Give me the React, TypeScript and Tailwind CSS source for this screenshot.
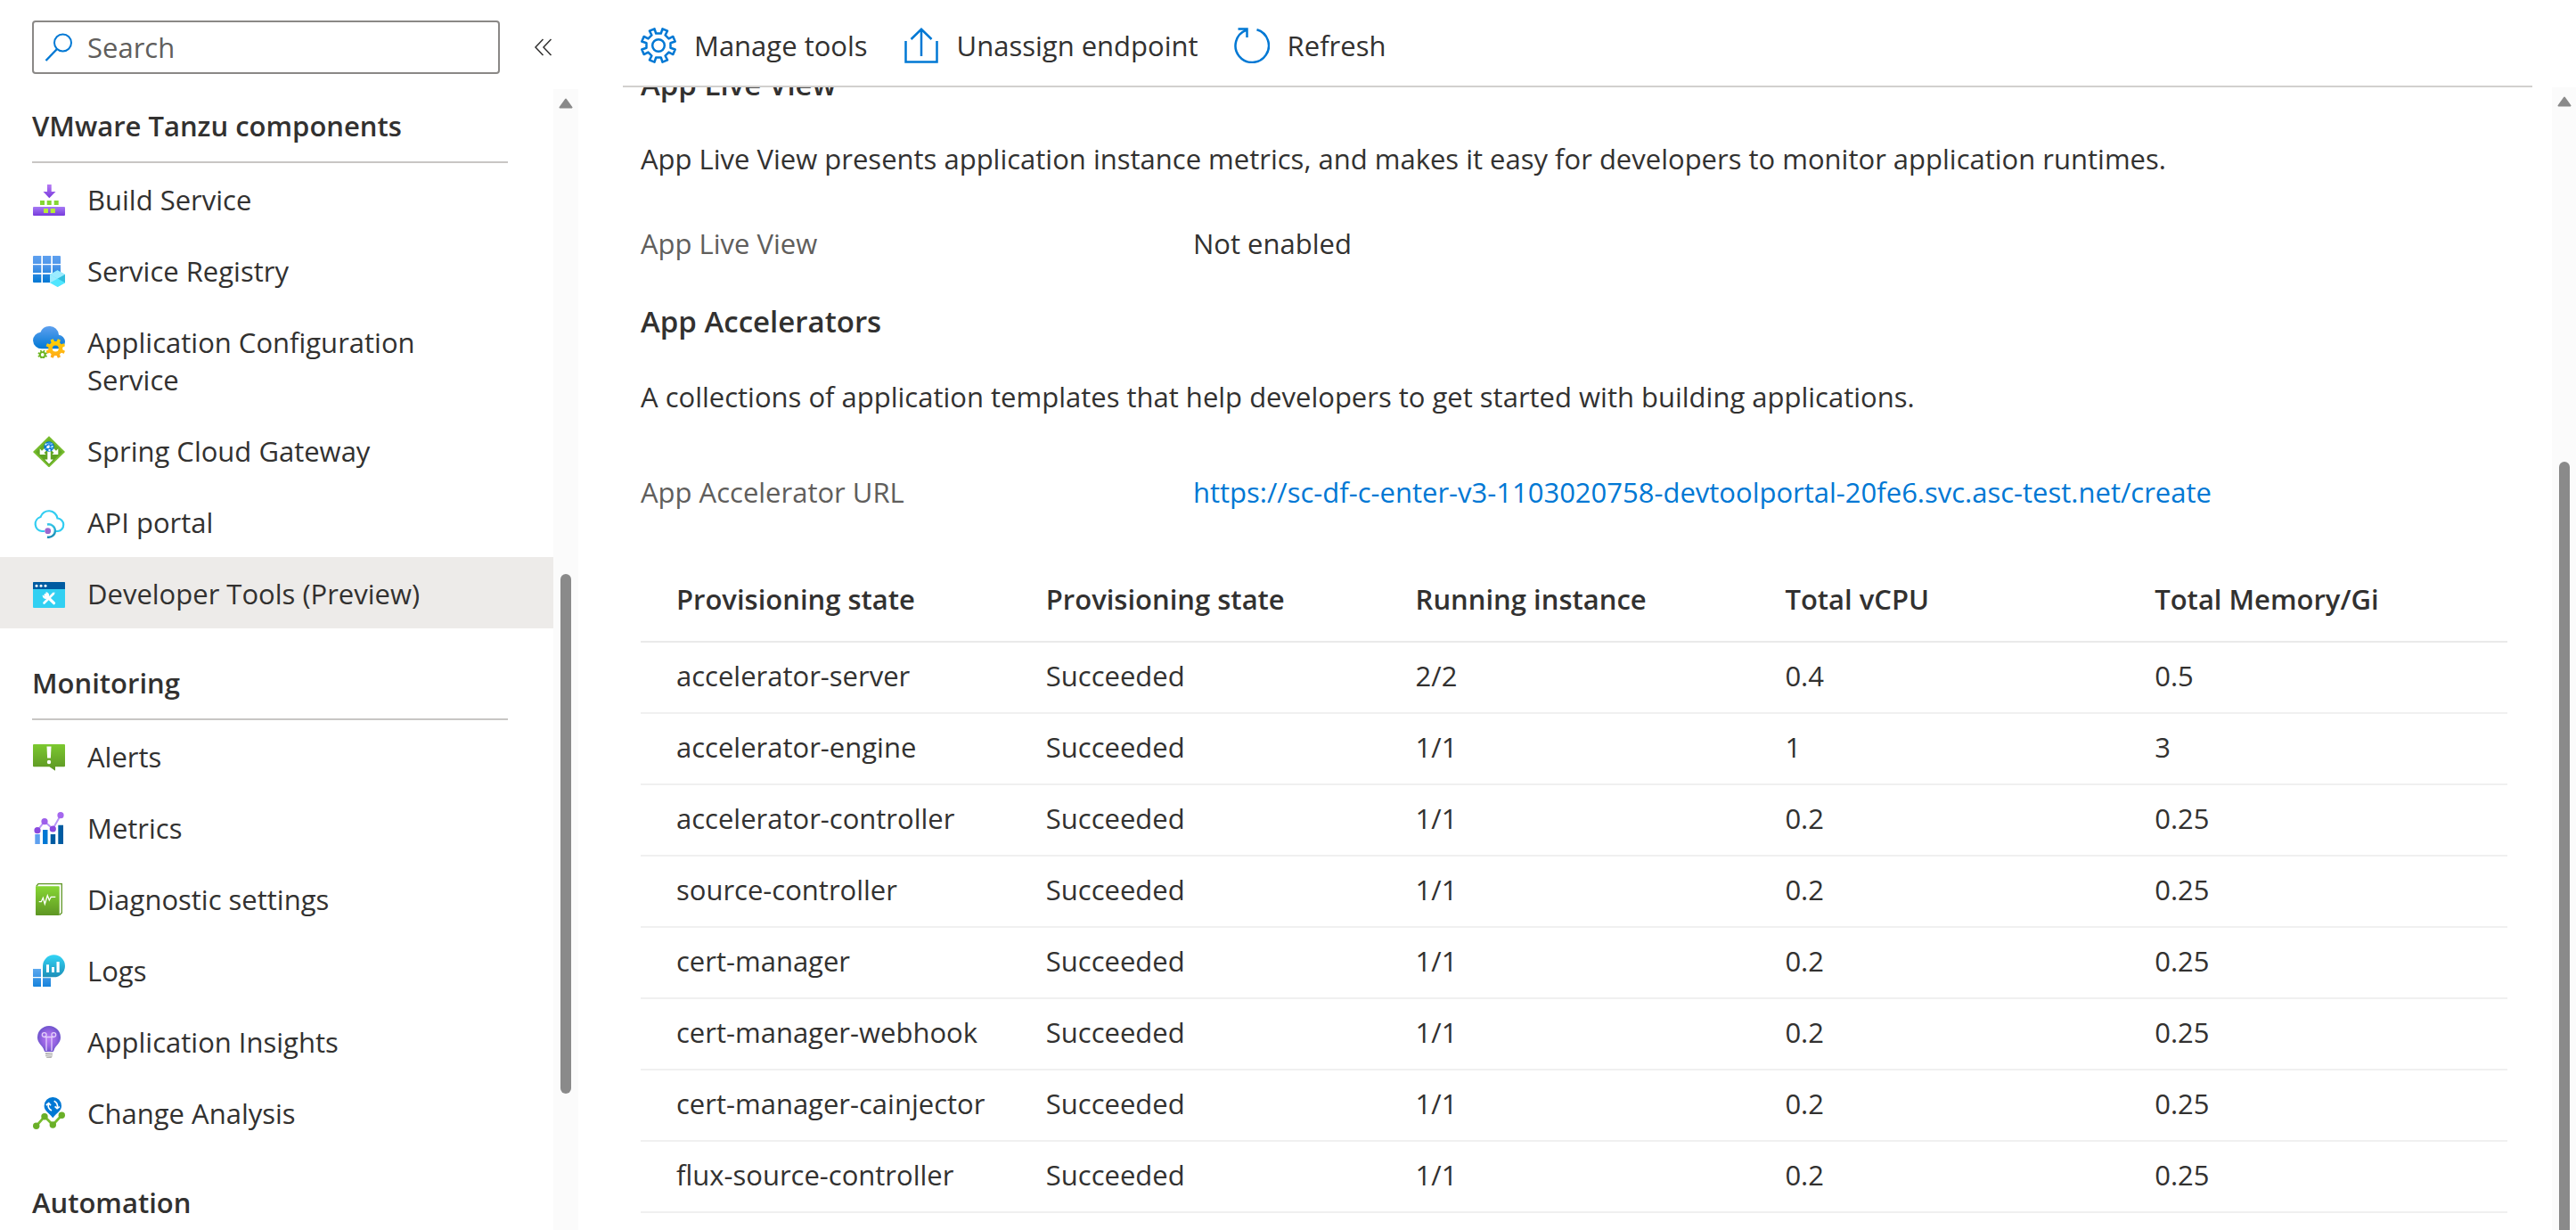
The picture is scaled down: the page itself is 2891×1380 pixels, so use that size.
import React from "react";

function gearPath(cx: number, cy: number, outer: number, inner: number, teeth: number, root = 0.3, tip = 0.19) {
  const pts: string[] = [];
  const step = (Math.PI * 2) / teeth;
  for (let i = 0; i < teeth; i++) {
    const a = i * step - Math.PI / 2 + step / 2;
    const corners: [number, number][] = [
      [inner, -root],
      [outer, -tip],
      [outer, tip],
      [inner, root],
    ];
    for (const [r, f] of corners) {
      pts.push(`${(cx + r * Math.cos(a + f * step)).toFixed(2)} ${(cy + r * Math.sin(a + f * step)).toFixed(2)}`);
    }
  }
  return `M${pts.join("L")}Z`;
}

function ring(cx: number, cy: number, r: number) {
  return `M${cx - r} ${cy}a${r} ${r} 0 1 0 ${2 * r} 0a${r} ${r} 0 1 0 ${-2 * r} 0Z`;
}

function Grad({ id, from, to }: { id: string; from: string; to: string }) {
  return (
    <linearGradient id={id} x1="0" y1="0" x2="0" y2="1">
      <stop offset="0" stopColor={from} />
      <stop offset="1" stopColor={to} />
    </linearGradient>
  );
}

function Icon({ children }: { children: React.ReactNode }) {
  return (
    <svg viewBox="0 0 36 36" className="h-9 w-9 shrink-0" aria-hidden="true">
      {children}
    </svg>
  );
}

const BuildIcon = () => (
  <Icon>
    <defs>
      <Grad id="bs-a" from="#b77af4" to="#773adc" />
      <Grad id="bs-b" from="#a67af4" to="#773adc" />
    </defs>
    <path d="M16 1h4.7v8h4.8l-7.2 7.3L11.500 9H16Z" fill="url(#bs-a)" />
    <path d="M8 19h5v5H8ZM15.700 19h5v5h-5ZM23.700 19h5v5h-5Z" fill="#86d633" />
    <rect y="26" width="36" height="10" rx="1" fill="url(#bs-b)" />
    <path d="M12 28h5v5h-5ZM19.700 28h5.200v5h-5.200Z" fill="#b4ec36" />
  </Icon>
);

const RegistryIcon = () => (
  <Icon>
    <defs>
      <linearGradient id="sr" gradientUnits="userSpaceOnUse" x1="0" y1="1" x2="0" y2="31">
        <stop offset="0" stopColor="#5ea0ef" />
        <stop offset="0.4" stopColor="#4c94e8" />
        <stop offset="1" stopColor="#0078d4" />
      </linearGradient>
    </defs>
    <path
      fill="url(#sr)"
      d="M1 1h8.300v9H0V2a1 1 0 0 1 1-1ZM11 1h9.300v9H11ZM22 1h8a1 1 0 0 1 1 1v8h-9ZM0 11.300h9.300v8.700H0ZM11 11.300h9.300v8.700H11ZM22 11.300h9v8.700h-9ZM0 21.700h9.300V31H1a1 1 0 0 1-1-1ZM11 21.700h9.300V31H11Z"
    />
    <path d="M27.500 17.300 36 22v9.300L27.500 36 19 31.300V22Z" fill="#50e6ff" />
    <path d="M27.500 17.300 36 22l-8.500 4.700L19 22Z" fill="#9cebff" />
    <path d="M27.500 26.700 36 22v9.300Z" fill="#32bedd" />
    <path d="M27.500 26.700 36 31.300 27.500 36Z" fill="#50e6ff" />
    <path d="M27.500 26.700 19 31.300V22Z" fill="#9cebff" />
  </Icon>
);

const ConfigIcon = () => (
  <Icon>
    <defs>
      <Grad id="ac-a" from="#5ea0ef" to="#0078d4" />
      <Grad id="ac-b" from="#ffd400" to="#ffa81a" />
    </defs>
    <path
      d="M36 17.500a8 8 0 0 0-7-7.700A10.200 10.200 0 0 0 18.500 0 10.500 10.500 0 0 0 8.500 6.800 9.600 9.600 0 0 0 0 16a9.800 9.800 0 0 0 10.100 9.300H28a8 8 0 0 0 8-7.800Z"
      fill="url(#ac-a)"
    />
    <path fillRule="evenodd" d={gearPath(25.3, 25, 11, 8, 8) + ring(25.3, 25, 3.5)} fill="url(#ac-b)" />
    <path fillRule="evenodd" d={gearPath(10.7, 32, 5.4, 3.9, 8) + ring(10.7, 32, 1.9)} fill="#6bb41f" />
  </Icon>
);

const GatewayIcon = () => (
  <Icon>
    <defs>
      <Grad id="sg" from="#6bb42a" to="#5a9a20" />
    </defs>
    <path d="M18 1.300 36 19 18 36.500 0 19Z" fill="#76bc2d" />
    <path d="M18 4 33 19 18 33.700 3 19Z" fill="url(#sg)" />
    <path d="M16.300 18h3.500v9.500h3L18 32.500l-4.800-5h3.100Z" fill="#fff" />
    <path d="M13.500 14.500l2.300 2.300-3.300 3.100 2 2.100H7.700v-6.800l2.300 2.500ZM22.500 14.500l-2.300 2.300 3.300 3.100-2 2.100h6.800v-6.800L26 17.700Z" fill="#fff" />
    <circle cx="18" cy="13" r="5.700" fill="#0078d4" />
    <path d="M13.500 11.500q4-4 8.500-1.500M14 16q3-6 8-6M16 9q3 5 6 7" fill="none" stroke="#83b9f9" strokeWidth="0.9" />
    <circle cx="17" cy="13.500" r="1.700" fill="#fff" />
    <circle cx="21.500" cy="13" r="1.200" fill="#c3f1ff" />
    <circle cx="18.500" cy="17" r="1.200" fill="#fff" />
    <circle cx="14.500" cy="10.500" r="1" fill="#fff" />
  </Icon>
);

const ApiIcon = () => (
  <Icon>
    <defs>
      <Grad id="ap-b" from="#32c5e8" to="#198ab3" />
    </defs>
    <path
      d="M13 28H10a8.200 8.200 0 0 1-1.500-16A9.800 9.800 0 0 1 27.500 13.500 7.300 7.300 0 0 1 28 28H24"
      fill="none"
      stroke="#32cdf1"
      strokeWidth="2.200"
    />
    <path d="M16 20.500a7.200 7.200 0 1 1 0 14" fill="none" stroke="url(#ap-b)" strokeWidth="2.400" />
    <circle cx="16.700" cy="27.700" r="3.400" fill="#9b68cf" />
  </Icon>
);

const ToolsIcon = () => (
  <Icon>
    <rect y="5" width="36" height="29" rx="1" fill="#32d0f2" />
    <path d="M1 5h34a1 1 0 0 1 1 1v7H0V6a1 1 0 0 1 1-1Z" fill="#005ba1" />
    <g fill="#fff">
      <circle cx="4" cy="9.300" r="1.500" />
      <circle cx="9" cy="9.300" r="1.500" />
      <circle cx="14" cy="9.300" r="1.500" />
    </g>
    <path d="M12.500 28.500 23 18" stroke="#fff" strokeWidth="2.600" strokeLinecap="round" />
    <path d="m22 18.700 3.300-2.700-2.300 3.600Z" fill="#fff" />
    <path d="M14 19.500 23.500 28.700" stroke="#fff" strokeWidth="3.200" strokeLinecap="round" />
    <path d="M14.500 16.300a3.800 3.800 0 1 1-3.800 3.200l2.500 1.500 1.900-1.800-.7-2.500Z" fill="#fff" />
  </Icon>
);

const AlertsIcon = () => (
  <Icon>
    <defs>
      <Grad id="al" from="#7cc92f" to="#5c9423" />
    </defs>
    <path d="M1 4h34a1 1 0 0 1 1 1v23.300a1 1 0 0 1-1 1H25v4.500l-6.500-4.500H1a1 1 0 0 1-1-1V5a1 1 0 0 1 1-1Z" fill="url(#al)" />
    <path d="M15.500 6.500h5l-.6 13h-3.800Z" fill="#fff" />
    <circle cx="18" cy="24" r="2.200" fill="#fff" />
  </Icon>
);

const MetricsIcon = () => (
  <Icon>
    <path d="M2.300 25h5.500v11H2.300Z" fill="#5ea0ef" />
    <path d="M11 20h5.500v16H11Z" fill="#0078d4" />
    <path d="M19.700 25h5.500v11h-5.500ZM28.300 14.700H34V36h-5.700Z" fill="#005ba1" />
    <path d="M5 20.700 13 10.700 22.300 19 31 3.700" fill="none" stroke="#b796f9" strokeWidth="2" />
    <g fill="#8a4adf">
      <circle cx="5" cy="20.700" r="3.600" />
      <circle cx="13" cy="10.700" r="3.600" fill="#9d5fea" />
      <circle cx="22.300" cy="19" r="3.600" />
      <circle cx="31" cy="3.700" r="3.600" fill="#a567ee" />
    </g>
  </Icon>
);

const DiagnosticIcon = () => (
  <Icon>
    <defs>
      <Grad id="dg" from="#86d633" to="#5e9624" />
    </defs>
    <path d="M3.700 3.500 6 .7h26.300v32.600L29.700 35.500" fill="#fff" stroke="#5e9624" strokeWidth="1.300" />
    <rect x="3" y="3.300" width="26.700" height="32.700" rx="0.800" fill="url(#dg)" />
    <path d="M6.700 20.700h2.600l2-4.400 2 7 3-9.600 2 5.300 2-3.700h5" fill="none" stroke="#fff" strokeWidth="1.300" />
  </Icon>
);

const LogsIcon = () => (
  <Icon>
    <defs>
      <Grad id="lg-a" from="#32d4f5" to="#1d8fb8" />
      <Grad id="lg-b" from="#5ea9ef" to="#1783dc" />
    </defs>
    <path d="M0 16h9v9H0ZM0 26.300h9V36H1a1 1 0 0 1-1-1ZM11 26.300h9V36h-9Z" fill="url(#lg-b)" />
    <path d="M11 25.300V12.700a12.500 12.500 0 1 1 12.500 12.600Z" fill="url(#lg-a)" />
    <path d="M15 11.300h3V20h-3ZM21 14h3v6h-3ZM26.500 8h3.200v12h-3.200Z" fill="#fff" />
  </Icon>
);

const InsightsIcon = () => (
  <Icon>
    <defs>
      <radialGradient id="ai" cx="0.5" cy="0.5" r="0.55">
        <stop offset="0" stopColor="#b77af4" />
        <stop offset="0.5" stopColor="#9a66e4" />
        <stop offset="1" stopColor="#6650c8" />
      </radialGradient>
    </defs>
    <path d="M31 13A13 13 0 1 0 5 13c0 6.500 6 9 7.500 14.500.2.900.700 1.500 1.500 1.500h8c.8 0 1.300-.6 1.500-1.500C25 22 31 19.500 31 13Z" fill="url(#ai)" />
    <g fill="none" stroke="#e3cffa" strokeWidth="1.300">
      <path d="M15 28V12.500M21 28V12.500M12.500 12.500h11" />
      <circle cx="12.700" cy="10" r="2.400" />
      <circle cx="23.300" cy="10" r="2.400" />
    </g>
    <path d="M14 30h8v3.500L20.500 36h-5L14 33.500Z" fill="#b3b3b3" />
    <path d="m14 32.500 8-1.200M14 34.500l8-1.200" stroke="#f2f2f2" strokeWidth="0.800" />
  </Icon>
);

const ChangeIcon = () => (
  <Icon>
    <path d="M3.700 32.300 13 21.700 22.300 31 32.300 20.300" fill="none" stroke="#76bc2d" strokeWidth="2.800" />
    <g fill="#6aaf28">
      <circle cx="3.700" cy="32.300" r="3.700" />
      <circle cx="13" cy="21.700" r="3.700" />
      <circle cx="22.300" cy="31" r="3.700" />
      <circle cx="32.300" cy="20.300" r="3.700" />
    </g>
    <path d="M32 9.700c0 5.500-5.500 7.800-9.700 13.600C18.100 17.500 12.600 15.200 12.600 9.700a9.700 9.700 0 1 1 19.400 0Z" fill="#0078d4" />
    <g fill="none" stroke="#fff" strokeWidth="1.700">
      <path d="M17.500 7.500q-1.500 5 3.500 7.500M27.200 12q1.500-5-3.500-7.800" />
      <path d="m14.800 9 2.900-2.300L20 9.300M24.600 10.300l2.500 2.300 2.800-2" />
    </g>
  </Icon>
);

const sections = [
  {
    title: "VMware Tanzu components",
    items: [
      { label: "Build Service", icon: BuildIcon },
      { label: "Service Registry", icon: RegistryIcon },
      { label: "Application Configuration Service", icon: ConfigIcon },
      { label: "Spring Cloud Gateway", icon: GatewayIcon },
      { label: "API portal", icon: ApiIcon },
      { label: "Developer Tools (Preview)", icon: ToolsIcon, selected: true },
    ],
  },
  {
    title: "Monitoring",
    items: [
      { label: "Alerts", icon: AlertsIcon },
      { label: "Metrics", icon: MetricsIcon },
      { label: "Diagnostic settings", icon: DiagnosticIcon },
      { label: "Logs", icon: LogsIcon },
      { label: "Application Insights", icon: InsightsIcon },
      { label: "Change Analysis", icon: ChangeIcon },
    ],
  },
  { title: "Automation", items: [] },
];

const columns = ["Provisioning state", "Provisioning state", "Running instance", "Total vCPU", "Total Memory/Gi"];

const rows = [
  ["accelerator-server", "Succeeded", "2/2", "0.4", "0.5"],
  ["accelerator-engine", "Succeeded", "1/1", "1", "3"],
  ["accelerator-controller", "Succeeded", "1/1", "0.2", "0.25"],
  ["source-controller", "Succeeded", "1/1", "0.2", "0.25"],
  ["cert-manager", "Succeeded", "1/1", "0.2", "0.25"],
  ["cert-manager-webhook", "Succeeded", "1/1", "0.2", "0.25"],
  ["cert-manager-cainjector", "Succeeded", "1/1", "0.2", "0.25"],
  ["flux-source-controller", "Succeeded", "1/1", "0.2", "0.25"],
];

function ScrollUpArrow() {
  return (
    <svg viewBox="0 0 16 12" className="h-3 w-4 shrink-0" aria-hidden="true">
      <path d="M8 1.500 14.500 10.500H1.500Z" fill="#8a8a8a" stroke="#8a8a8a" strokeWidth="2" strokeLinejoin="round" />
    </svg>
  );
}

function Sidebar() {
  return (
    <aside className="flex w-[649px] shrink-0 flex-col">
      <div className="flex h-[100px] shrink-0 items-start pt-[23px] pl-9">
        <label className="flex h-[60px] w-[525px] items-center gap-4 rounded-sm border-2 border-[#8a8886] pl-3">
          <svg viewBox="0 0 32 32" className="h-8 w-8 shrink-0" fill="none" stroke="#0078d4" strokeWidth="2" aria-hidden="true">
            <circle cx="20.500" cy="11" r="9.500" />
            <path d="M14 18 1.500 31" strokeWidth="2.400" />
          </svg>
          <input
            type="text"
            aria-label="Search"
            placeholder="Search"
            className="w-full min-w-0 bg-transparent outline-none placeholder:text-[#605e5c]"
          />
        </label>
        <button type="button" aria-label="Collapse menu" className="ml-[38px] flex h-[60px] items-center">
          <svg viewBox="0 0 22 20" className="h-5 w-[22px]" fill="none" stroke="#323130" strokeWidth="1.500" aria-hidden="true">
            <path d="M10.500 1 2 10l8.500 9M19.500 1 11 10l8.500 9" />
          </svg>
        </button>
      </div>
      <div className="flex min-h-0 flex-1">
        <nav className="-mt-5 min-w-0 flex-1">
          {sections.map((section) => (
            <section key={section.title}>
              <h2 className="mr-[51px] ml-9 border-b-2 border-[#c8c6c4] pt-10 pb-[19px] font-semibold">{section.title}</h2>
              <ul>
                {section.items.map(({ label, icon: ItemIcon, selected }) => (
                  <li key={label}>
                    <a
                      href="#"
                      aria-current={selected ? "page" : undefined}
                      className={`flex items-start gap-[25px] pt-5 pr-24 pb-[18px] pl-[37px] ${selected ? "bg-[#edebe9]" : ""}`}
                    >
                      <span className="flex h-[42px] items-center">
                        <ItemIcon />
                      </span>
                      <span>{label}</span>
                    </a>
                  </li>
                ))}
              </ul>
            </section>
          ))}
        </nav>
        <div className="flex w-7 shrink-0 flex-col items-center bg-[#fbfbfb] pt-2.5" aria-hidden="true">
          <ScrollUpArrow />
          <div className="mt-[522px] h-[583px] w-3 shrink-0 rounded-full bg-[#8a8a8a]" />
        </div>
      </div>
    </aside>
  );
}

function Toolbar() {
  const tool = "flex items-center gap-5";
  const svg = { fill: "none", stroke: "#0078d4", strokeWidth: 2.5, viewBox: "0 0 40 40", "aria-hidden": true } as const;
  return (
    <div role="toolbar" className="mr-[49px] ml-[50px] flex h-[98px] shrink-0 items-center gap-10 border-b-2 border-[#d2d0ce] pt-1.5 pl-5">
      <button type="button" className={tool}>
        <svg {...svg} className="h-10 w-10">
          <path d={gearPath(20, 20, 19.2, 13.8, 8, 0.24, 0.2)} strokeLinejoin="round" />
          <circle cx="20" cy="20" r="6.800" />
        </svg>
        Manage tools
      </button>
      <button type="button" className={tool}>
        <svg {...svg} className="h-10 w-10">
          <path d="M2.500 15V38.500H37.500V15M20 32V2M8.500 13 20 1.800 31.500 13" />
        </svg>
        Unassign endpoint
      </button>
      <button type="button" className={tool}>
        <svg {...svg} className="h-10 w-10">
          <path d="M25.500 2.300A18.700 18.700 0 1 1 13.500 2.800M4.500 1.500H14.500V11" />
        </svg>
        Refresh
      </button>
    </div>
  );
}

export default function App() {
  return (
    <div className="flex h-screen overflow-hidden bg-white font-['Open_Sans','Noto_Sans',sans-serif] text-[31px] leading-[42px] text-[#323130]">
      <Sidebar />
      <div className="flex min-w-0 flex-1 flex-col">
        <Toolbar />
        <div className="flex min-h-0 flex-1">
          <main className="min-w-0 flex-1 overflow-hidden pr-[50px] pl-[70px]">
            <h2 className="-mt-6 text-[33px] font-semibold">App Live View</h2>
            <p className="mt-[41px]">
              App Live View presents application instance metrics, and makes it easy for developers to monitor application runtimes.
            </p>
            <dl className="mt-[53px] flex">
              <dt className="w-[620px] text-[#605e5c]">App Live View</dt>
              <dd>Not enabled</dd>
            </dl>
            <h2 className="mt-[46px] text-[33px] font-semibold">App Accelerators</h2>
            <p className="mt-[42px]">
              A collections of application templates that help developers to get started with building applications.
            </p>
            <dl className="mt-[65px] flex">
              <dt className="w-[620px] text-[#605e5c]">App Accelerator URL</dt>
              <dd>
                <a href="#" className="text-[#0078d4]">
                  https://sc-df-c-enter-v3-1103020758-devtoolportal-20fe6.svc.asc-test.net/create
                </a>
              </dd>
            </dl>
            <table className="mt-[51px] w-full table-fixed border-collapse text-left">
              <thead>
                <tr className="h-24 border-b-2 border-[#eaeaea]">
                  {columns.map((c, i) => (
                    <th key={i} scope="col" className="w-[19.8%] pl-10 font-semibold last:w-auto">
                      {c}
                    </th>
                  ))}
                </tr>
              </thead>
              <tbody>
                {rows.map((r) => (
                  <tr key={r[0]} className="h-20 border-b-2 border-[#f0f0f0]">
                    {r.map((cell, i) => (
                      <td key={i} className="pb-1 pl-10">
                        {cell}
                      </td>
                    ))}
                  </tr>
                ))}
              </tbody>
            </table>
          </main>
          <div className="flex w-[27px] shrink-0 flex-col items-center bg-[#fbfbfb] pt-2.5" aria-hidden="true">
            <ScrollUpArrow />
            <div className="mt-[398px] w-3 flex-1 rounded-t-full bg-[#8a8a8a]" />
          </div>
        </div>
      </div>
    </div>
  );
}
